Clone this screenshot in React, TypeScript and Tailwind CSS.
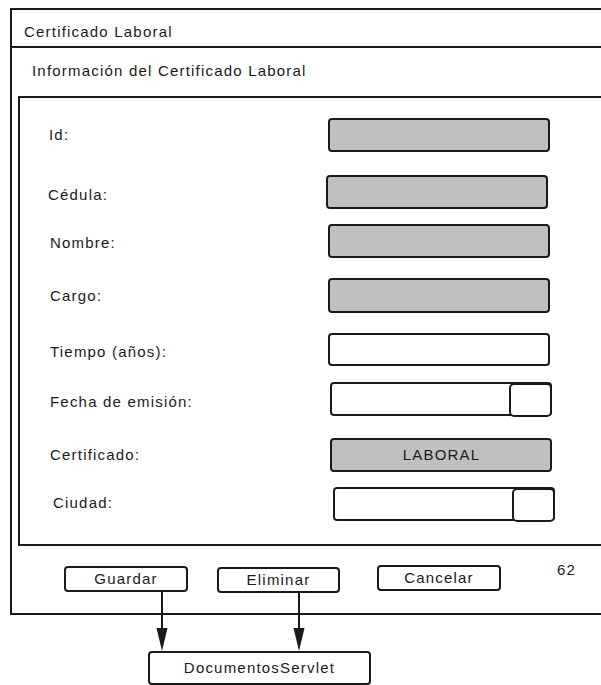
import React from "react";

interface FieldRow {
  label: string;
  rowClass: string;
  labelClass: string;
  boxClass: string;
  kind: "filled" | "empty" | "picker" | "value";
  value?: string;
}

const rows: FieldRow[] = [
  {
    label: "Id:",
    rowClass: "mt-[20px]",
    labelClass: "ml-[29px] w-[279px]",
    boxClass: "h-[34px]",
    kind: "filled",
  },
  {
    label: "Cédula:",
    rowClass: "mt-[23px]",
    labelClass: "ml-[28px] w-[278px] mt-[6px]",
    boxClass: "h-[34px]",
    kind: "filled",
  },
  {
    label: "Nombre:",
    rowClass: "mt-[15px]",
    labelClass: "ml-[30px] w-[278px] mt-[4px]",
    boxClass: "h-[34px]",
    kind: "filled",
  },
  {
    label: "Cargo:",
    rowClass: "mt-[20px]",
    labelClass: "ml-[30px] w-[278px]",
    boxClass: "h-[35px]",
    kind: "filled",
  },
  {
    label: "Tiempo (años):",
    rowClass: "mt-[20px]",
    labelClass: "ml-[30px] w-[278px] mt-[5px]",
    boxClass: "h-[33px]",
    kind: "empty",
  },
  {
    label: "Fecha de emisión:",
    rowClass: "mt-[16px]",
    labelClass: "ml-[30px] w-[280px] mt-[6px]",
    boxClass: "h-[34px]",
    kind: "picker",
  },
  {
    label: "Certificado:",
    rowClass: "mt-[22px]",
    labelClass: "ml-[30px] w-[280px]",
    boxClass: "h-[34px]",
    kind: "value",
    value: "LABORAL",
  },
  {
    label: "Ciudad:",
    rowClass: "mt-[15px]",
    labelClass: "ml-[33px] w-[280px] -mt-[2px]",
    boxClass: "h-[34px]",
    kind: "picker",
  },
];

function FieldBox({ row }: { row: FieldRow }) {
  if (row.kind === "picker") {
    return (
      <div
        className={`${row.boxClass} w-[222px] shrink-0 flex items-start justify-end border-2 border-[#1a1a1a] rounded-[4px] bg-white`}
      >
        <div className="w-[43px] h-[34px] -mt-[1px] -mr-[2px] shrink-0 border-2 border-[#1a1a1a] rounded-[5px] bg-white" />
      </div>
    );
  }

  return (
    <div
      className={`${row.boxClass} w-[222px] shrink-0 flex items-center justify-center border-2 border-[#1a1a1a] rounded-[4px] ${
        row.kind === "empty" ? "bg-white" : "bg-[#c0c0c0]"
      }`}
    >
      {row.value && <span className="pl-[1px]">{row.value}</span>}
    </div>
  );
}

function Arrows() {
  // conectores de los botones hacia el servlet
  return (
    <svg
      className="absolute inset-0 pointer-events-none"
      width={601}
      height={685}
      viewBox="0 0 601 685"
    >
      <line x1={162} y1={592} x2={162} y2={630} stroke="#1a1a1a" strokeWidth={2} />
      <polygon points="156.5,628 167.5,628 162,651" fill="#1a1a1a" />
      <line x1={299} y1={593} x2={299} y2={630} stroke="#1a1a1a" strokeWidth={2} />
      <polygon points="293.5,628 304.5,628 299,651" fill="#1a1a1a" />
    </svg>
  );
}

export default function App() {
  return (
    <div className="relative w-[601px] h-[685px] overflow-hidden bg-white font-['Liberation_Sans',Arial,sans-serif] text-[15px] leading-[18px] tracking-[1.2px] text-[#1a1a1a]">
      <div className="ml-[10px] mt-[8px] w-[620px] h-[607px] border-2 border-[#1a1a1a] flex flex-col">
        <div className="h-[38px] shrink-0 border-b-2 border-[#1a1a1a] pl-[12px] pt-[13px]">
          Certificado Laboral
        </div>

        <div className="h-[48px] shrink-0 pl-[20px] pt-[14px]">
          Información del Certificado Laboral
        </div>

        <div className="ml-[6px] h-[450px] shrink-0 border-2 border-[#1a1a1a] flex flex-col">
          {rows.map((row) => (
            <div key={row.label} className={`flex items-center ${row.rowClass}`}>
              <div className={`shrink-0 ${row.labelClass}`}>{row.label}</div>
              <FieldBox row={row} />
            </div>
          ))}
        </div>

        <div className="flex items-start mt-[19px]">
          <button className="ml-[52px] mt-[1px] w-[124px] h-[26px] flex items-center justify-center border-2 border-[#1a1a1a] rounded-[4px] bg-white">
            Guardar
          </button>
          <button className="ml-[29px] mt-[2px] w-[123px] h-[26px] flex items-center justify-center border-2 border-[#1a1a1a] rounded-[4px] bg-white">
            Eliminar
          </button>
          <button className="ml-[37px] w-[124px] h-[26px] flex items-center justify-center border-2 border-[#1a1a1a] rounded-[4px] bg-white">
            Cancelar
          </button>
          <span className="ml-[56px] -mt-[4px]">62</span>
        </div>
      </div>

      <div className="ml-[148px] mt-[36px] w-[223px] h-[34px] flex items-center justify-center border-2 border-[#1a1a1a] rounded-[4px] bg-white">
        DocumentosServlet
      </div>

      <Arrows />
    </div>
  );
}
